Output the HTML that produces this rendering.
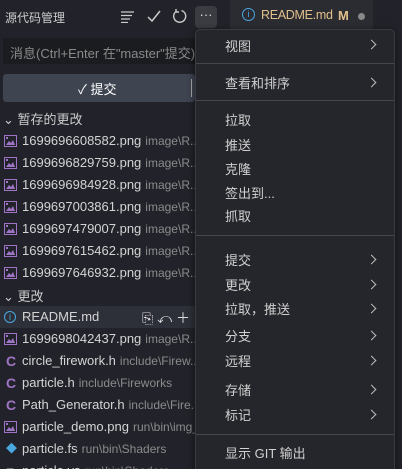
<!DOCTYPE html><html><head><meta charset="utf-8"><style>
*{margin:0;padding:0;box-sizing:border-box}
html,body{width:402px;height:469px;overflow:hidden}
body{background:#22232a;font-family:"Liberation Sans","Noto Sans CJK SC",sans-serif;font-size:13px;color:#d4d4d4;position:relative}
.a{position:absolute;white-space:nowrap}
.row{position:absolute;left:0;width:195px;height:22px;line-height:22px;white-space:nowrap;overflow:hidden}
.row .ic{position:absolute;left:4px;top:5px;width:13px;height:12px}
.row .n{position:absolute;left:22px}
.d{color:#8b8b8b;font-size:12px;margin-left:4px}
.menu{position:absolute;left:195px;top:29px;width:200px;height:450px;background:#25262b;border:1px solid #3a3b40;border-radius:5px;box-shadow:0 2px 8px rgba(0,0,0,.6)}
.mi{position:absolute;left:29px;font-size:13px;color:#d0d0d0}
.ch{position:absolute;left:172px;width:7px;height:7px;border-top:1.3px solid #bbb;border-right:1.3px solid #bbb;transform:rotate(45deg)}
.sep{position:absolute;left:0;width:198px;height:1px;background:#46474c}
.c{color:#a074c4;font-weight:bold;font-size:14px;left:6px;position:absolute}
</style></head><body>
<div class="a" style="left:5px;top:9px;font-size:12px;color:#ccc">源代码管理</div>
<svg class="a" style="left:121px;top:11px" width="14" height="12"><path d="M0 1h13M0 4.5h11M0 8h9M0 11.5h7" stroke="#ccc" stroke-width="1.2"/></svg>
<svg class="a" style="left:147px;top:10px" width="14" height="13"><path d="M1 7l4 4 8-10" stroke="#ccc" stroke-width="1.5" fill="none"/></svg>
<svg class="a" style="left:172px;top:9px" width="15" height="15"><path d="M4 2.5A6 6 0 1 0 9.5 1.5M4 0v3h3" stroke="#ccc" stroke-width="1.4" fill="none"/></svg>
<div class="a" style="left:195px;top:6px;width:22px;height:22px;background:#3a3c42;border-radius:4px;color:#ddd;text-align:center;line-height:18px;font-size:13px">···</div>
<div class="a" style="left:230px;top:0;width:143px;height:29px;background:#2b2c31"></div>
<div class="a" style="left:242px;top:8px;width:13px;height:13px;border:1.3px solid #4aa8e0;border-radius:50%;color:#4aa8e0;font-size:9px;text-align:center;line-height:11px">i</div>
<div class="a" style="left:261px;top:8px;color:#e2c08d;font-size:12.5px;letter-spacing:-0.3px">README.md</div>
<div class="a" style="left:338px;top:8px;color:#e2c08d;font-weight:bold">M</div>
<div class="a" style="left:358px;top:13px;width:7px;height:7px;border-radius:50%;background:#888"></div>
<div class="a" style="left:3px;top:38px;width:192px;height:26px;background:#1b1c20"></div>
<div class="a" style="left:10px;top:43px;color:#8a8a8a">消息(Ctrl+Enter 在"master"提交)</div>
<div class="a" style="left:3px;top:74px;width:192px;height:28px;background:#3f4451;border-radius:3px"></div>
<div class="a" style="left:191px;top:79px;width:1px;height:18px;background:#aaa"></div>
<div class="a" style="left:78px;top:79px;color:#fff;font-size:13px">✓ 提交</div>
<div class="a" style="left:3px;top:109px;color:#ccc">⌄ 暂存的更改</div>
<div class="row" style="top:306px;background:#2e3039"></div>
<div class="a" style="left:3px;top:286px;color:#ccc">⌄ 更改</div>
<div id="l"></div>
<div class="menu">
<div class="mi" style="top:6px">视图</div><div class="ch" style="top:11px"></div>
<div class="sep" style="top:33px"></div>
<div class="mi" style="top:43px">查看和排序</div><div class="ch" style="top:49px"></div>
<div class="sep" style="top:70px"></div>
<div class="mi" style="top:80px">拉取</div>
<div class="mi" style="top:105px">推送</div>
<div class="mi" style="top:129px">克隆</div>
<div class="mi" style="top:153px">签出到...</div>
<div class="mi" style="top:176px">抓取</div>
<div class="sep" style="top:205px"></div>
<div class="mi" style="top:220px">提交</div><div class="ch" style="top:226px"></div>
<div class="mi" style="top:245px">更改</div><div class="ch" style="top:251px"></div>
<div class="mi" style="top:269px">拉取，推送</div><div class="ch" style="top:275px"></div>
<div class="mi" style="top:296px">分支</div><div class="ch" style="top:302px"></div>
<div class="mi" style="top:321px">远程</div><div class="ch" style="top:327px"></div>
<div class="mi" style="top:350px">存储</div><div class="ch" style="top:356px"></div>
<div class="mi" style="top:375px">标记</div><div class="ch" style="top:381px"></div>
<div class="sep" style="top:404px"></div>
<div class="mi" style="top:413px">显示 GIT 输出</div>
</div>
<script>
var img='<svg class="ic" viewBox="0 0 13 12"><rect x="0.5" y="0.5" width="12" height="11" fill="none" stroke="#a074c4"/><path d="M2 10l3-4 2 2 2-3 2 5z" fill="#a074c4"/><rect x="2" y="2" width="2" height="2" fill="#a074c4"/></svg>';
var rows=[[130,img,'1699696608582.png','image\\R...'],[152,img,'1699696829759.png','image\\R...'],[174,img,'1699696984928.png','image\\R...'],[196,img,'1699697003861.png','image\\R...'],[218,img,'1699697479007.png','image\\R...'],[240,img,'1699697615462.png','image\\R...'],[262,img,'1699697646932.png','image\\R...'],
[306,'<span class="ic" style="border:1.2px solid #4aa8e0;border-radius:50%;width:12px;height:12px;color:#4aa8e0;font-size:9px;text-align:center;line-height:10px">i</span>','README.md',''],
[328,img,'1699698042437.png','image\\R...'],[350,'<span class="c">C</span>','circle_firework.h','include\\Firew...'],[372,'<span class="c">C</span>','particle.h','include\\Fireworks'],[394,'<span class="c">C</span>','Path_Generator.h','include\\Fire...'],[416,img,'particle_demo.png','run\\bin\\img_'],[438,'<span class="c" style="color:#4aa8e0;font-size:11px">◆</span>','particle.fs','run\\bin\\Shaders'],[460,'<span class="c" style="color:#ccc">≡</span>','particle.vs','run\\bin\\Shaders']];
var h='';rows.forEach(function(r){h+='<div class="row" style="top:'+r[0]+'px">'+r[1]+'<span class="n">'+r[2]+'<span class="d">'+r[3]+'</span></span></div>'});
h+='<div class="a" style="left:142px;top:308px;color:#ddd;font-size:14px">⎘ ↶ ＋</div>';
document.getElementById('l').innerHTML=h;
</script>
</body></html>
